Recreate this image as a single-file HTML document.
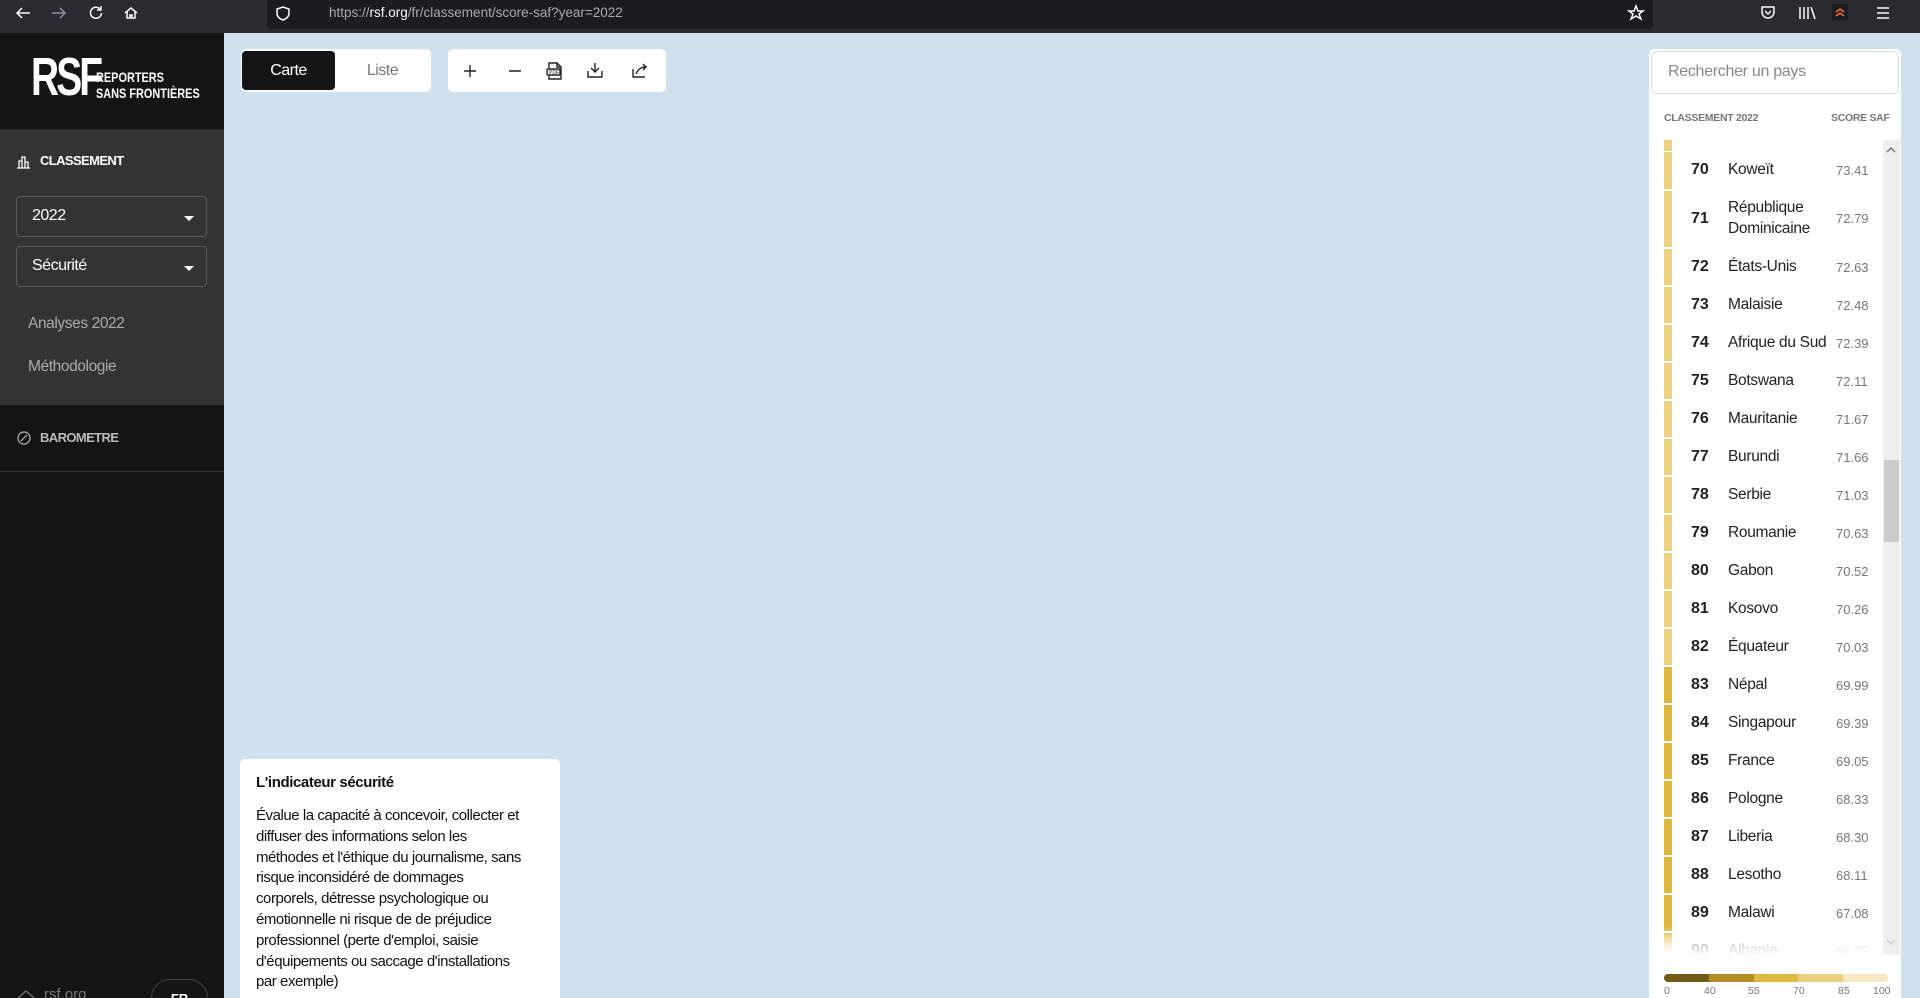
<!DOCTYPE html>
<html style="width:1920px;height:998px;overflow:hidden"><head><meta charset="utf-8"><style>
*{box-sizing:border-box;margin:0;padding:0}
body{width:1920px;height:998px;overflow:hidden;background:#cfe1ee;font-family:"Liberation Sans",Arial,sans-serif;position:relative}
.abs{position:absolute}
.topbar{left:0;top:0;width:1920px;height:33px;background:#2b2a33}
.url{left:267px;top:0;width:1386px;height:29px;background:#1c1b22;border-radius:0 0 4px 4px}
.side{left:0;top:33px;width:224px;height:965px;background:#141414}
.grey{left:0;top:129px;width:224px;height:276px;background:#333}
.sel{left:16px;width:191px;height:41px;border:1px solid #5a5a5a;border-radius:4px;color:#fff;font-size:16px;padding:10px 15px;letter-spacing:-.5px}
.sel:after{content:"";position:absolute;right:12px;top:19px;border:5px solid transparent;border-top:5px solid #fff;border-bottom:0}
.box{background:#fff;border-radius:5px}
.row{position:absolute;left:1664px;width:219px;}
.bar{position:absolute;left:0;top:1px;bottom:1px;width:8px}
.rk{position:absolute;left:27px;font-weight:bold;font-size:16px;color:#222}
.nm{position:absolute;left:64px;font-size:15.5px;color:#222;letter-spacing:-.3px;line-height:21px}
.sc{position:absolute;left:172px;font-size:13px;color:#777}
</style></head><body>
<div class="abs topbar"></div>
<div class="abs url"></div>
<svg class="abs" style="left:0;top:0" width="300" height="30" fill="none" stroke="#fbfbfe" stroke-width="1.5">
<path d="M30 13H17M22 8l-5 5 5 5"/>
<path d="M52 13h13M60 8l5 5-5 5" stroke="#8f8f9d"/>
<path d="M100 9a5.5 5.5 0 1 0 1.5 4M101 6v4h-4"/>
<path d="M125 13l6-5 6 5M127 11v7h8v-7M130 18v-3h2v3"/>
<path d="M283 7l6 2v4c0 4-3 6-6 7-3-1-6-3-6-7V9z"/>
<rect x="304" y="12" width="10" height="8" rx="1"/><path d="M306 12V9a3 3 0 0 1 6 0v3"/>
</svg>
<div class="abs" style="left:329px;top:5px;font-size:13.5px;color:#aaa">https://<span style="color:#fbfbfe">rsf.org</span>/fr/classement/score-saf?year=2022</div>
<svg class="abs" style="left:1620px;top:0" width="300" height="30" fill="none" stroke="#fbfbfe" stroke-width="1.5">
<path d="M16 6l2 5h5l-4 3 2 5-5-3-5 3 2-5-4-3h5z"/>
<path d="M142 7h12v5a6 6 0 0 1-12 0zM145 11l3 3 3-3"/>
<path d="M180 7v12M184 7v12M188 7v12M191 7l4 12"/>
<rect x="212" y="4" width="16" height="16" fill="#1c1b22" stroke="none"/><path d="M216 12l4-3 4 3M216 16l4-3 4 3" stroke="#ff6b2b"/>
<path d="M257 8h12M257 13h12M257 18h12"/>
</svg>

<div class="abs side"></div>
<div class="abs" style="left:31px;top:53px;font-weight:bold;font-size:54px;color:#fff;letter-spacing:-4px;line-height:48px;transform:scaleX(.72);transform-origin:left">RSF</div>
<div class="abs" style="left:96px;top:69px;font-weight:bold;font-size:14px;color:#fff;line-height:16px;transform:scaleX(.78);transform-origin:left;white-space:nowrap">REPORTERS<br>SANS FRONTIÈRES</div>
<div class="abs grey"></div>
<svg class="abs" style="left:16px;top:154px" width="16" height="16" fill="none" stroke="#fff" stroke-width="1.3"><path d="M1 14h13M3 14V7h3v7M6 14V3h3v11M9 14V8h3v6"/></svg>
<div class="abs" style="left:40px;top:153px;color:#fff;font-weight:bold;font-size:13px;letter-spacing:-.6px">CLASSEMENT</div>
<div class="abs sel" style="top:196px">2022</div>
<div class="abs sel" style="top:246px">Sécurité</div>
<div class="abs" style="left:28px;top:315px;color:#aaa;font-size:15.5px;letter-spacing:-.4px">Analyses 2022</div>
<div class="abs" style="left:28px;top:358px;color:#aaa;font-size:15.5px;letter-spacing:-.4px">Méthodologie</div>
<svg class="abs" style="left:16px;top:430px" width="16" height="16" fill="none" stroke="#bbb" stroke-width="1.2"><circle cx="8" cy="8" r="6"/><path d="M5 11l6-6"/></svg>
<div class="abs" style="left:40px;top:430px;color:#bbb;font-weight:bold;font-size:13px;letter-spacing:-.6px">BAROMETRE</div>
<div class="abs" style="left:0;top:471px;width:224px;height:1px;background:#333"></div>
<svg class="abs" style="left:16px;top:988px" width="20" height="10" fill="none" stroke="#777" stroke-width="1.3"><path d="M2 10l8-7 8 7"/></svg>
<div class="abs" style="left:44px;top:986px;color:#777;font-size:15px">rsf.org</div>
<div class="abs" style="left:151px;top:979px;width:57px;height:19px;border:1px solid #444;border-bottom:0;border-radius:20px 20px 0 0;color:#fff;font-weight:bold;font-size:13px;text-align:center;padding-top:11px;overflow:hidden">FR</div>

<div class="abs box" style="left:241px;top:49px;width:190px;height:43px"></div>
<div class="abs" style="left:242px;top:51px;width:93px;height:39px;background:#141414;border-radius:4px;color:#fff;font-size:16px;text-align:center;line-height:39px;letter-spacing:-.5px">Carte</div>
<div class="abs" style="left:335px;top:51px;width:95px;height:39px;color:#777;font-size:16px;text-align:center;line-height:39px;letter-spacing:-.5px">Liste</div>
<div class="abs box" style="left:448px;top:49px;width:218px;height:43px"></div>
<svg class="abs" style="left:448px;top:49px" width="218" height="43" fill="none" stroke="#222" stroke-width="1.4">
<path d="M22 16v12M16 22h12M61 22h12"/>
<path d="M101 14h8l4 4v12h-12zM109 14v4h4"/><rect x="99" y="20" width="13" height="6" rx="1" fill="#fff"/>
<text x="101" y="25" font-size="5" fill="#222" stroke="none" font-family="Liberation Sans">PDF</text>
<path d="M147 14v9M143 19l4 4 4-4M140 22v6h14v-6"/>
<path d="M185 20v8h12M188 25c2-5 5-7 10-7M195 15l3 3-3 3"/>
</svg>

<div class="abs box" style="left:240px;top:759px;width:320px;height:239px;border-radius:5px 5px 0 0"></div>
<div class="abs" style="left:256px;top:774px;font-weight:bold;font-size:15px;color:#111;letter-spacing:-.4px">L'indicateur sécurité</div>
<div class="abs" style="left:256px;top:806px;white-space:nowrap;font-size:15px;line-height:20.8px;color:#111;letter-spacing:-.45px">Évalue la capacité à concevoir, collecter et<br>diffuser des informations selon les<br>méthodes et l'éthique du journalisme, sans<br>risque inconsidéré de dommages<br>corporels, détresse psychologique ou<br>émotionnelle ni risque de de préjudice<br>professionnel (perte d'emploi, saisie<br>d'équipements ou saccage d'installations<br>par exemple)</div>

<div class="abs" style="left:1649px;top:49px;width:252px;height:949px;background:#fff;border-radius:5px 5px 0 0"></div>
<div class="abs" style="left:1651px;top:51px;width:248px;height:43px;border:1px solid #ddd;border-radius:6px;color:#888;font-size:16px;padding:11px 16px;letter-spacing:-.3px">Rechercher un pays</div>
<div class="abs" style="left:1664px;top:112px;font-size:10.5px;font-weight:bold;color:#777;letter-spacing:-.3px">CLASSEMENT 2022</div>
<div class="abs" style="left:1831px;top:112px;font-size:10.5px;font-weight:bold;color:#777;letter-spacing:-.3px">SCORE SAF</div>
<div class="abs" style="left:1883px;top:140px;width:17px;height:815px;background:#efefef"></div>
<div class="abs" style="left:1884px;top:460px;width:15px;height:82px;background:#ccc"></div>
<svg class="abs" style="left:1883px;top:140px" width="17" height="815" fill="none" stroke="#777" stroke-width="1.5"><path d="M4 12l4-4 4 4"/><path d="M4 800l4 4 4-4" stroke="#ccc"/></svg>
<div class="abs" style="left:1664px;top:140px;width:8px;height:11px;background:#ead07f"></div>
<div id="list"></div>
<div class="abs" style="left:1664px;top:926px;width:219px;height:30px;background:linear-gradient(rgba(255,255,255,0),rgba(255,255,255,.75) 60%,#fff)"></div>

<div class="abs" style="left:1664px;top:974px;width:224px;height:8px;border-radius:4px;overflow:hidden;display:flex">
<div style="flex:1;background:#735a17"></div><div style="flex:1;background:#b38d1f"></div><div style="flex:1;background:#dfb83f"></div><div style="flex:1;background:#ead07f"></div><div style="flex:1;background:#f5e8c0"></div></div>
<div class="abs" style="left:1664px;top:985px;width:228px;font-size:10.5px;color:#777">
<span class="abs" style="left:0">0</span><span class="abs" style="left:40px">40</span><span class="abs" style="left:84px">55</span><span class="abs" style="left:129px">70</span><span class="abs" style="left:174px">85</span><span class="abs" style="left:209px">100</span></div>

<script>
var d=[[70,"Koweït","73.41"],[71,"République<br>Dominicaine","72.79"],[72,"États-Unis","72.63"],[73,"Malaisie","72.48"],[74,"Afrique du Sud","72.39"],[75,"Botswana","72.11"],[76,"Mauritanie","71.67"],[77,"Burundi","71.66"],[78,"Serbie","71.03"],[79,"Roumanie","70.63"],[80,"Gabon","70.52"],[81,"Kosovo","70.26"],[82,"Équateur","70.03"],[83,"Népal","69.99"],[84,"Singapour","69.39"],[85,"France","69.05"],[86,"Pologne","68.33"],[87,"Liberia","68.30"],[88,"Lesotho","68.11"],[89,"Malawi","67.08"],[90,"Albanie","66.75"]];
var h="";
d.forEach(function(r){var n=r[0];var top,ht;
if(n==70){top=151;ht=39}else if(n==71){top=190;ht=58}else{top=248+(n-72)*38;ht=38}
if(n==90)ht=24;
var c=n>=83?"#e0b83e":"#ead07f";
var two=n==71;
h+='<div class="row" style="top:'+top+'px;height:'+ht+'px;overflow:hidden"><div class="bar" style="background:'+c+'"></div>'+
'<div class="rk" style="top:'+(two?20:10)+'px">'+n+'</div>'+
'<div class="nm" style="top:'+(two?7:8)+'px">'+r[1]+'</div>'+
'<div class="sc" style="top:'+(two?21:12)+'px">'+r[2]+'</div></div>';});
document.getElementById("list").innerHTML=h;
</script>
</body></html>
